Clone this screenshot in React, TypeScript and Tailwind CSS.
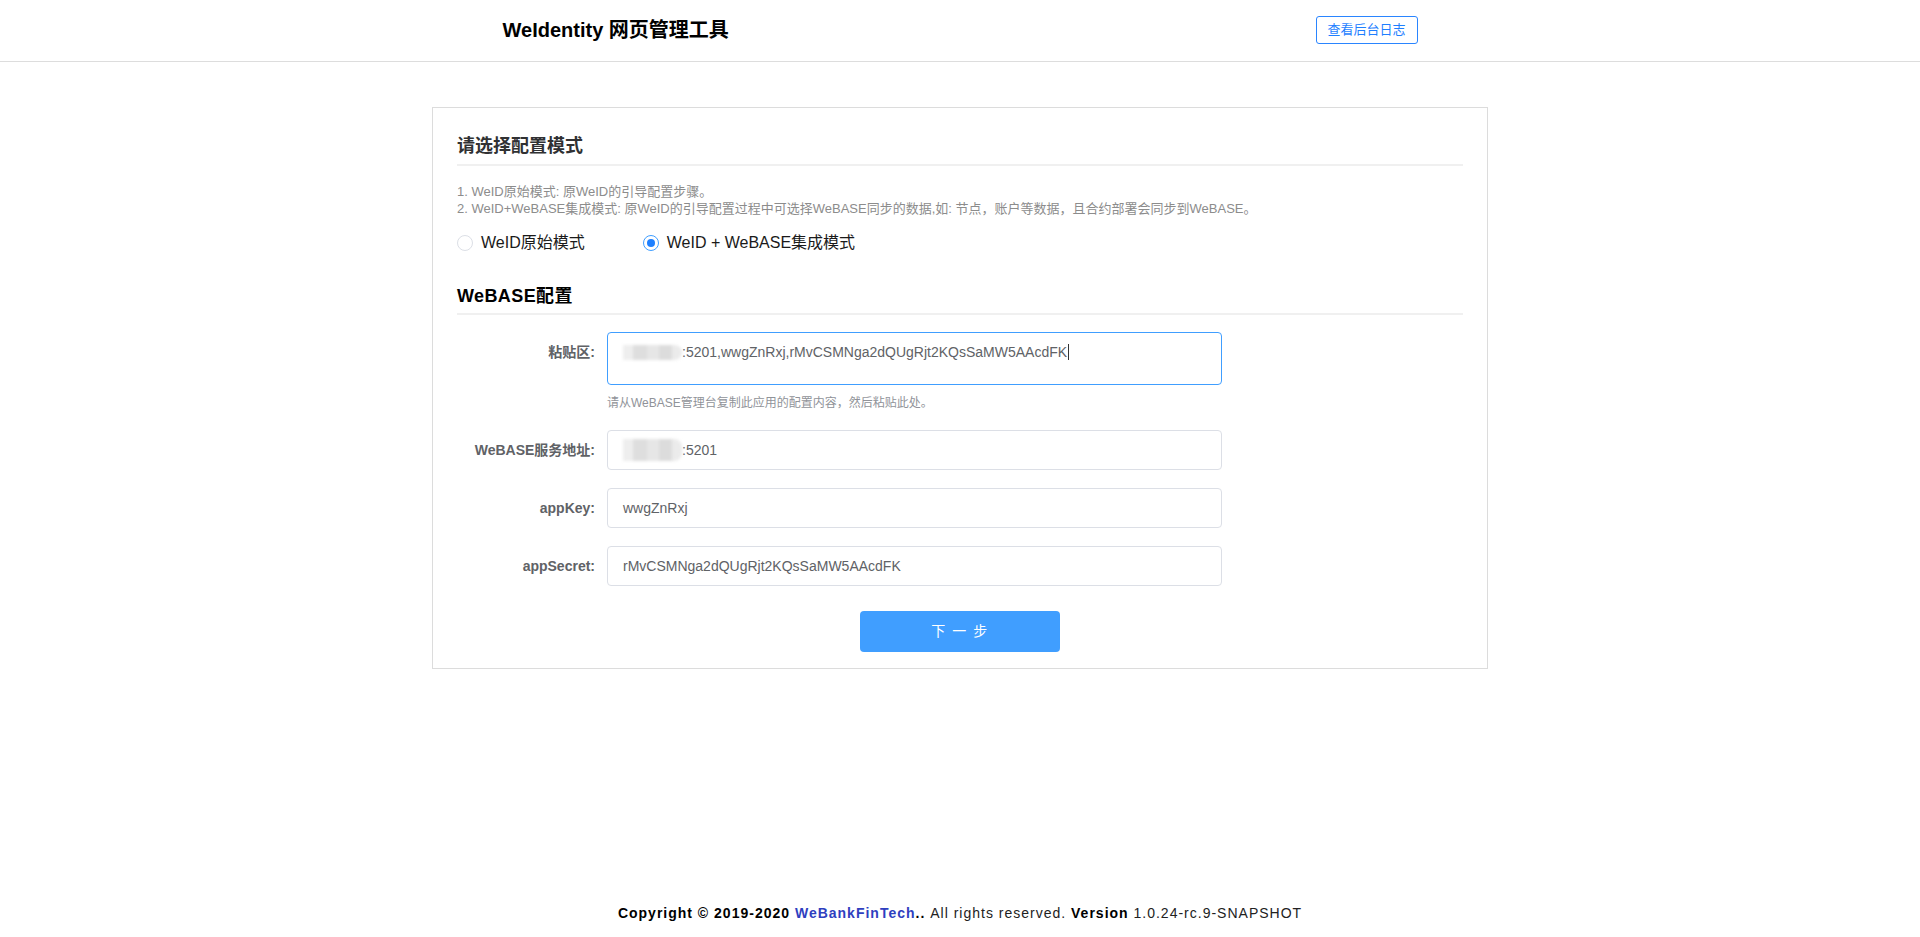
import React from "react";

const FONT = { fontFamily: '"Liberation Sans", Arial, "Noto Sans CJK SC", sans-serif' };

function Blur({ tall }: { tall?: boolean }) {
  return (
    <span
      className={`inline-block align-middle relative w-[59px] ${tall ? "h-[22px]" : "h-[15px]"} mr-[0px]`}
    >
      <span className="absolute inset-0 flex blur-[1.5px] rounded-r-[8px] overflow-hidden">
        <span className="w-[10px] h-full bg-[#eeeeee]" />
        <span className="w-[14px] h-full bg-[#dedede]" />
        <span className="w-[12px] h-full bg-[#e6e6e6]" />
        <span className="w-[13px] h-full bg-[#dcdcdc]" />
        <span className="w-[10px] h-full bg-[#ebebeb]" />
      </span>
    </span>
  );
}

function Radio({ checked, label }: { checked?: boolean; label: string }) {
  return (
    <label className="flex items-center cursor-pointer">
      <span
        className={`w-4 h-4 rounded-full border flex items-center justify-center bg-white ${
          checked ? "border-[#409eff]" : "border-[#dcdfe6]"
        }`}
      >
        {checked && <span className="w-[8px] h-[8px] rounded-full bg-[#1e80ff]" />}
      </span>
      <span className="ml-[8px] text-[16px] leading-[20px] text-[#1a1a1a]">{label}</span>
    </label>
  );
}

function Row({ label, children, mt }: { label: string; children: React.ReactNode; mt: string }) {
  return (
    <div className={`flex ${mt}`}>
      <div className="w-[150px] pr-[12px] text-right text-[14px] leading-[40px] font-bold text-[#606266] shrink-0">
        {label}
      </div>
      <div className="w-[615px]">{children}</div>
    </div>
  );
}

export default function App() {
  return (
    <div className="min-h-screen flex flex-col bg-white" style={FONT}>
      <header className="h-[62px] border-b border-[#dddddd] shrink-0">
        <div className="w-[915px] mx-auto h-[61px] flex items-center justify-between">
          <div className="text-[20px] font-bold text-black leading-[28px] -mt-[1px]">WeIdentity 网页管理工具</div>
          <button className="w-[102px] h-[28px] border border-[#2a85ff] rounded-[3px] text-[13px] text-[#1f7fff] bg-white -mt-[1px]">
            查看后台日志
          </button>
        </div>
      </header>

      <main className="flex-1">
        <div className="w-[1056px] mx-auto mt-[45px] border border-[#dcdcdc] px-[24px] pt-[26px] pb-[16px]">
          <div className="text-[18px] leading-[24px] font-bold text-[#303133] pb-[6px] border-b-2 border-[#f0f0f0]">
            请选择配置模式
          </div>
          <div className="mt-[17px] text-[13px] leading-[17px] text-[#8c8c8c]">
            <div>1. WeID原始模式: 原WeID的引导配置步骤。</div>
            <div>2. WeID+WeBASE集成模式: 原WeID的引导配置过程中可选择WeBASE同步的数据,如: 节点，账户等数据，且合约部署会同步到WeBASE。</div>
          </div>
          <div className="mt-[16px] flex items-center h-[20px]">
            <Radio label="WeID原始模式" />
            <div className="ml-[58px]">
              <Radio checked label="WeID + WeBASE集成模式" />
            </div>
          </div>

          <div className="mt-[31px] text-[18px] leading-[24px] font-bold tracking-[0.4px] text-black pb-[5px] border-b-2 border-[#f0f0f0]">
            WeBASE配置
          </div>

          <Row label="粘贴区:" mt="mt-[17px]">
            <div className="h-[53px] border border-[#409eff] rounded-[4px] px-[15px] py-[8px] text-[14px] leading-[20px] text-[#606266] whitespace-nowrap">
              <Blur />
              <span className="align-middle">:5201,wwgZnRxj,rMvCSMNga2dQUgRjt2KQsSaMW5AAcdFK</span>
              <span className="inline-block align-middle w-px h-[16px] bg-[#333] ml-[1px]" />
            </div>
            <div className="mt-[9px] text-[12px] leading-[18px] text-[#909399]">
              请从WeBASE管理台复制此应用的配置内容，然后粘贴此处。
            </div>
          </Row>

          <Row label="WeBASE服务地址:" mt="mt-[18px]">
            <div className="h-[40px] border border-[#dcdfe6] rounded-[4px] px-[15px] flex items-center text-[14px] text-[#606266]">
              <Blur tall />
              <span>:5201</span>
            </div>
          </Row>
          <Row label="appKey:" mt="mt-[18px]">
            <div className="h-[40px] border border-[#dcdfe6] rounded-[4px] px-[15px] flex items-center text-[14px] text-[#606266]">
              wwgZnRxj
            </div>
          </Row>
          <Row label="appSecret:" mt="mt-[18px]">
            <div className="h-[40px] border border-[#dcdfe6] rounded-[4px] px-[15px] flex items-center text-[14px] text-[#606266]">
              rMvCSMNga2dQUgRjt2KQsSaMW5AAcdFK
            </div>
          </Row>

          <div className="mt-[25px] flex justify-center">
            <button className="w-[200px] h-[41px] rounded-[4px] bg-[#409eff] text-white text-[14px] tracking-[1.5px]">
              下 一 步
            </button>
          </div>
        </div>
      </main>

      <footer className="pb-[14px] text-center text-[14px] leading-[20px] tracking-[1px] text-[#222]">
        <span className="font-bold text-black">Copyright © 2019-2020 </span>
        <span className="font-bold text-[#2f3fbf]">WeBankFinTech</span>
        <span className="font-bold text-black">.. </span>
        <span>All rights reserved. </span>
        <span className="font-bold text-black">Version </span>
        <span>1.0.24-rc.9-SNAPSHOT</span>
      </footer>
    </div>
  );
}
